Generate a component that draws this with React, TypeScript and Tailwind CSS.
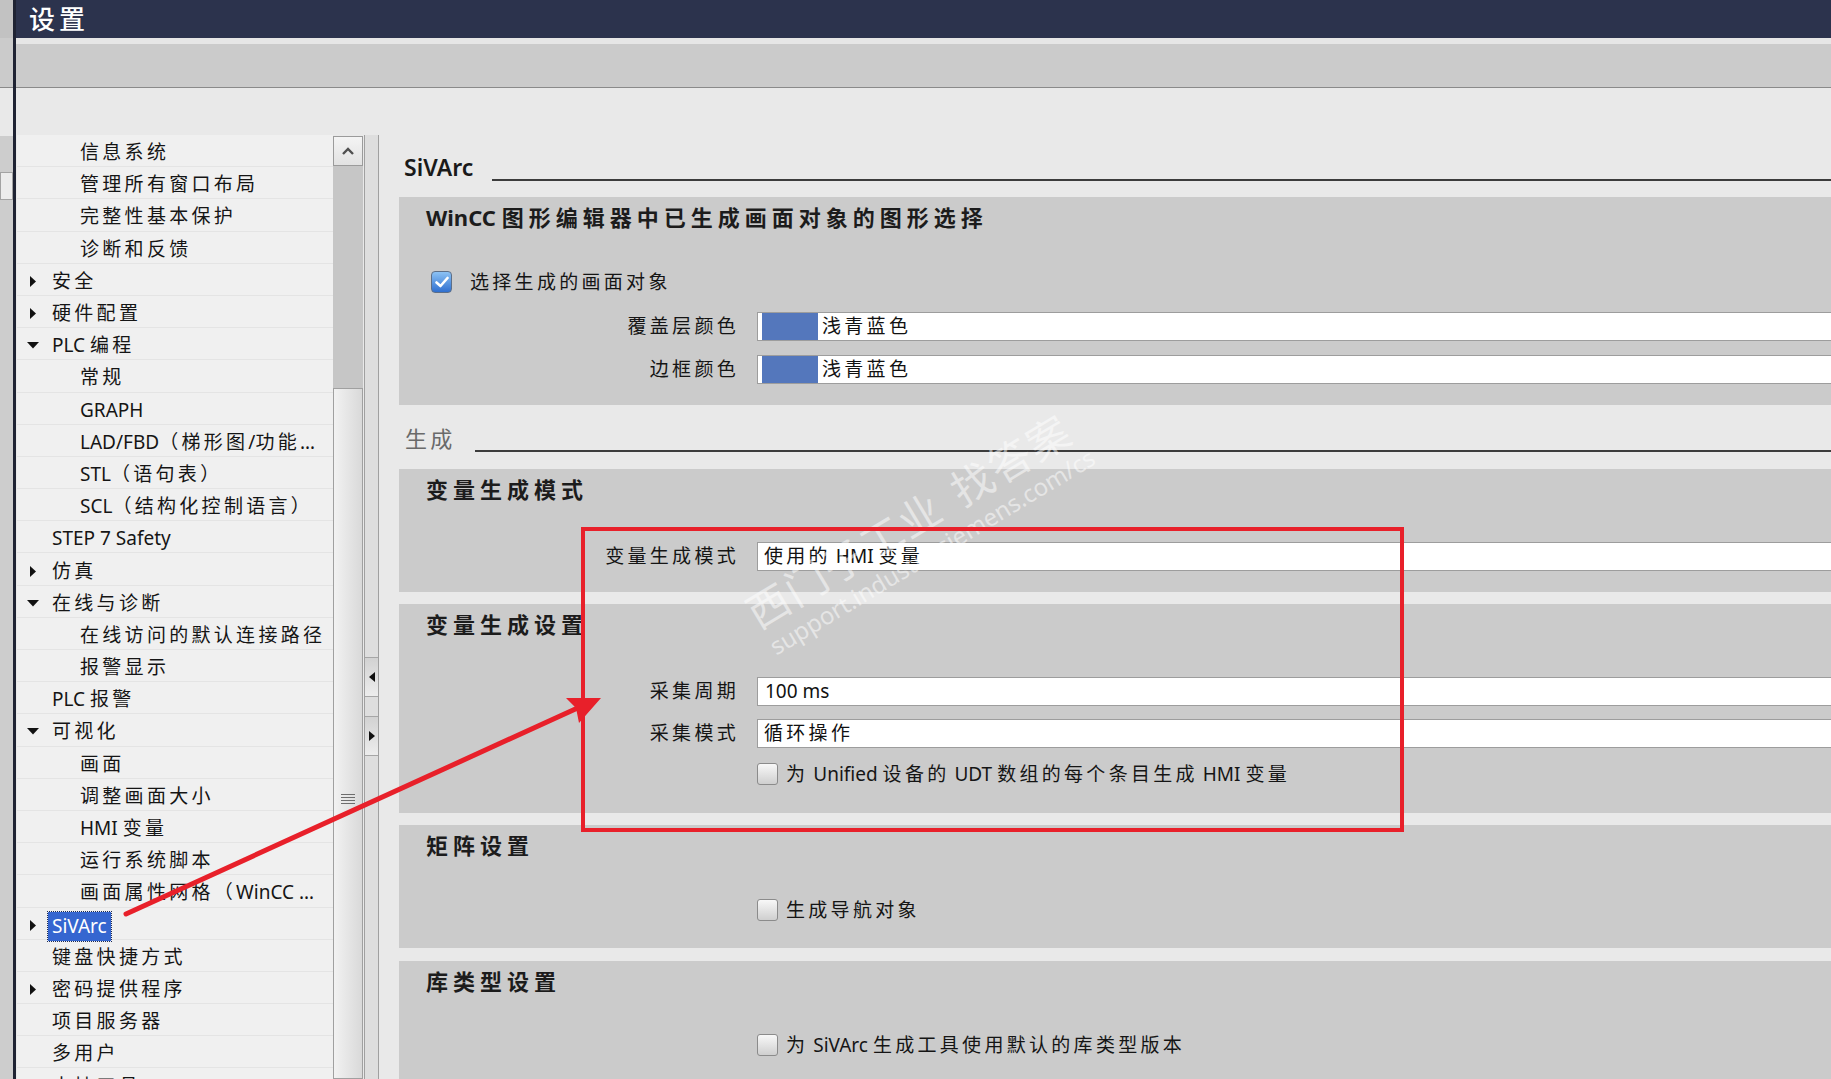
import React from "react";

const CJK_RE = /([\u2e80-\u9fff\uff00-\uffef\u3000-\u303f]+)/;
const CJK_TEST = /[\u2e80-\u9fff\uff00-\uffef\u3000-\u303f]/;

// CJK runs in the TIA UI are spaced out, latin runs are not
function T({ s, wide }: { s: string; wide?: boolean }) {
  const parts = s.split(CJK_RE);
  return (
    <>
      {parts.map((p, i) =>
        CJK_TEST.test(p) ? (
          <span key={i} className={wide ? "tracking-[5px]" : "tracking-[3.3px]"}>
            {p}
          </span>
        ) : (
          <span key={i}>{p}</span>
        )
      )}
    </>
  );
}

type TreeItem = { text: string; level: 1 | 2; arrow?: "right" | "down"; selected?: boolean };

const tree: TreeItem[] = [
  { text: "信息系统", level: 2 },
  { text: "管理所有窗口布局", level: 2 },
  { text: "完整性基本保护", level: 2 },
  { text: "诊断和反馈", level: 2 },
  { text: "安全", level: 1, arrow: "right" },
  { text: "硬件配置", level: 1, arrow: "right" },
  { text: "PLC 编程", level: 1, arrow: "down" },
  { text: "常规", level: 2 },
  { text: "GRAPH", level: 2 },
  { text: "LAD/FBD（梯形图/功能…", level: 2 },
  { text: "STL（语句表）", level: 2 },
  { text: "SCL（结构化控制语言）", level: 2 },
  { text: "STEP 7 Safety", level: 1 },
  { text: "仿真", level: 1, arrow: "right" },
  { text: "在线与诊断", level: 1, arrow: "down" },
  { text: "在线访问的默认连接路径", level: 2 },
  { text: "报警显示", level: 2 },
  { text: "PLC 报警", level: 1 },
  { text: "可视化", level: 1, arrow: "down" },
  { text: "画面", level: 2 },
  { text: "调整画面大小", level: 2 },
  { text: "HMI 变量", level: 2 },
  { text: "运行系统脚本", level: 2 },
  { text: "画面属性网格（WinCC …", level: 2 },
  { text: "SiVArc", level: 1, arrow: "right", selected: true },
  { text: "键盘快捷方式", level: 1 },
  { text: "密码提供程序", level: 1, arrow: "right" },
  { text: "项目服务器", level: 1 },
  { text: "多用户", level: 1 },
  { text: "支持工具", level: 1 },
];

function Arrow({ dir }: { dir: "right" | "down" }) {
  if (dir === "right")
    return (
      <svg width="7" height="11" viewBox="0 0 7 11">
        <polygon points="0,0 6,5.5 0,11" fill="#111" />
      </svg>
    );
  return (
    <svg width="12" height="7" viewBox="0 0 12 7">
      <polygon points="0,0 12,0 6,6.5" fill="#111" />
    </svg>
  );
}

function TreeRow({ item }: { item: TreeItem }) {
  return (
    <div className="h-[32.2px] pt-[4px] flex items-center border-b border-[#e4e4e4] text-[19px] leading-none text-[#151515] whitespace-nowrap">
      {item.level === 1 ? (
        <div className="w-[31px] flex items-center justify-center pl-[1px]">
          {item.arrow && <Arrow dir={item.arrow} />}
        </div>
      ) : (
        <div className="w-[63px]" />
      )}
      {item.selected ? (
        <span className="h-[29px] mt-[2px] px-[4px] flex items-center bg-[#3566d0] text-white outline outline-1 outline-dotted outline-[#1b2a55]">
          {item.text}
        </span>
      ) : (
        <span className={item.level === 1 ? "pl-[4px]" : ""}>
          <T s={item.text} />
        </span>
      )}
    </div>
  );
}

function CheckBox({ checked }: { checked?: boolean }) {
  if (checked)
    return (
      <div className="w-[21px] h-[22px] rounded-[4px] border border-[#5d6f88] bg-linear-to-b from-[#8cc2f4] to-[#2f6fcf] flex items-center justify-center shrink-0">
        <svg width="14" height="12" viewBox="0 0 14 12">
          <path d="M1.5 6.5 L5.5 10 L12.5 2" stroke="#fff" strokeWidth="2.6" fill="none" strokeLinecap="round" strokeLinejoin="round" />
        </svg>
      </div>
    );
  return (
    <div className="w-[21px] h-[22px] rounded-[3px] border border-[#8b8b8b] bg-linear-to-b from-[#f8f8f8] to-[#cfcfcf] shrink-0" />
  );
}

function Field({ label, children }: { label: string; children: React.ReactNode }) {
  return (
    <div className="flex items-center h-[29px]">
      <div className="w-[340px] text-right text-[19px] leading-none text-[#151515] whitespace-nowrap">
        <T s={label} />
      </div>
      <div className="ml-[18px] flex-1 h-full bg-white border border-[#9d9d9d] flex items-center text-[19px] leading-none text-[#111] whitespace-nowrap">
        {children}
      </div>
    </div>
  );
}

function Panel({ title, className, children }: { title: string; className: string; children: React.ReactNode }) {
  return (
    <div className={"bg-[#cbcbcb] pt-[5px] " + className}>
      <div className="h-[30px] pl-[27px] text-[22px] font-bold leading-[30px] text-[#1c1c1c] whitespace-nowrap">
        <T s={title} wide />
      </div>
      {children}
    </div>
  );
}

function Heading({ text, muted, className }: { text: string; muted?: boolean; className: string }) {
  return (
    <div className={"flex items-end h-[28px] " + className}>
      <span className={muted ? "text-[22px] leading-[28px] text-[#6a6a6a]" : "text-[23px] leading-[28px] font-semibold text-[#1a1a1a]"}>
        <T s={text} />
      </span>
      <div className="flex-1 h-[2px] bg-[#3c3c3c] ml-[19px]" />
    </div>
  );
}

function Swatch() {
  return <div className="ml-[4px] w-[56px] h-full bg-[#5477bc]" />;
}

export default function App() {
  return (
    <div className="relative w-[1831px] h-[1079px] overflow-hidden flex bg-[#e9e9e9] font-['Noto_Sans','Noto_Sans_CJK_SC',sans-serif]">
      {/* window behind, left edge */}
      <div className="w-[13px] shrink-0 flex flex-col bg-[#cdcdcd]">
        <div className="h-[38px] bg-[#c2c2c2]" />
        <div className="h-[50px] bg-[#cbcbcb] border-b border-[#8a8a8a]" />
        <div className="h-[48px] bg-[#e9e9e9]" />
        <div className="mt-[36px] h-[28px] bg-[#ececec] border border-[#a3a3a3]" />
        <div className="flex-1 bg-[#cdcdcd]" />
      </div>
      <div className="w-[3px] shrink-0 bg-[#1f2333]" />

      <div className="flex-1 flex flex-col min-w-0">
        <div className="h-[38px] bg-[#2c334d] flex items-center pl-[13px] text-white text-[26px] tracking-[4px] leading-none font-medium">设置</div>
        <div className="h-[6px] bg-[#e6e6e6]" />
        <div className="h-[44px] bg-[#cbcbcb] border-b border-[#8a8a8a]" />

        <div className="flex-1 flex pt-[47px] min-h-0">
          {/* tree */}
          <div className="ml-[1px] w-[316px] shrink-0 bg-[#f0f0f0] overflow-hidden">
            {tree.map((item, i) => (
              <TreeRow key={i} item={item} />
            ))}
          </div>

          {/* scrollbar */}
          <div className="w-[30px] shrink-0 flex flex-col">
            <div className="mt-[1px] h-[30px] border border-[#9b9b9b] bg-linear-to-b from-[#f4f4f4] to-[#e2e2e2] flex items-center justify-center">
              <svg width="14" height="9" viewBox="0 0 14 9">
                <path d="M2 7 L7 2 L12 7" stroke="#505050" strokeWidth="2.4" fill="none" />
              </svg>
            </div>
            <div className="h-[222px] bg-[#c6c6c6]" />
            <div className="flex-1 border border-[#a0a0a0] bg-linear-to-r from-[#f2f2f2] to-[#d9d9d9] flex flex-col items-center pt-[405px]">
              <div className="w-[14px] flex flex-col gap-[2px]">
                <div className="h-[1px] bg-[#6d6d6d]" />
                <div className="h-[1px] bg-[#6d6d6d]" />
                <div className="h-[1px] bg-[#6d6d6d]" />
                <div className="h-[1px] bg-[#6d6d6d]" />
              </div>
            </div>
          </div>

          {/* splitter */}
          <div className="ml-[1px] w-[15px] shrink-0 border-x border-[#a0a0a0] bg-[#dedede] flex flex-col pt-[522px]">
            <div className="h-[40px] border-y border-[#a6a6a6] bg-linear-to-b from-[#d2d2d2] to-[#ededed] flex items-center justify-center">
              <svg width="6" height="10" viewBox="0 0 6 10">
                <polygon points="6,0 0,5 6,10" fill="#111" />
              </svg>
            </div>
            <div className="h-[19px]" />
            <div className="h-[40px] border-y border-[#a6a6a6] bg-linear-to-b from-[#d2d2d2] to-[#ededed] flex items-center justify-center">
              <svg width="6" height="10" viewBox="0 0 6 10">
                <polygon points="0,0 6,5 0,10" fill="#111" />
              </svg>
            </div>
          </div>

          {/* content */}
          <div className="ml-[20px] w-[1460px] shrink-0 flex flex-col">
            <Heading text="SiVArc" className="mt-[18px] pl-[5px]" />

            <Panel title="WinCC 图形编辑器中已生成画面对象的图形选择" className="mt-[16px] pb-[21px]">
              <div className="mt-[39px] h-[22px] pl-[32px] flex items-center gap-[9px] text-[19px] leading-none text-[#151515]">
                <CheckBox checked />
                <T s="选择生成的画面对象" />
              </div>
              <div className="mt-[19px]">
                <Field label="覆盖层颜色">
                  <Swatch />
                  <span className="ml-[4px]"><T s="浅青蓝色" /></span>
                </Field>
              </div>
              <div className="mt-[14px]">
                <Field label="边框颜色">
                  <Swatch />
                  <span className="ml-[4px]"><T s="浅青蓝色" /></span>
                </Field>
              </div>
            </Panel>

            <Heading text="生成" muted className="mt-[19px] pl-[6px]" />

            <Panel title="变量生成模式" className="mt-[17px] pb-[21px]">
              <div className="mt-[38px]">
                <Field label="变量生成模式">
                  <span className="pl-[6px]"><T s="使用的 HMI 变量" /></span>
                </Field>
              </div>
            </Panel>

            <Panel title="变量生成设置" className="mt-[12px] pb-[28px]">
              <div className="mt-[38px]">
                <Field label="采集周期">
                  <span className="pl-[7px]">100 ms</span>
                </Field>
              </div>
              <div className="mt-[13px]">
                <Field label="采集模式">
                  <span className="pl-[6px]"><T s="循环操作" /></span>
                </Field>
              </div>
              <div className="mt-[15px] h-[22px] pl-[358px] flex items-center gap-[8px] text-[19px] leading-none text-[#151515] whitespace-nowrap">
                <CheckBox />
                <span><T s="为 Unified 设备的 UDT 数组的每个条目生成 HMI 变量" /></span>
              </div>
            </Panel>

            <Panel title="矩阵设置" className="mt-[12px] pb-[27px]">
              <div className="mt-[39px] h-[22px] pl-[358px] flex items-center gap-[8px] text-[19px] leading-none text-[#151515] whitespace-nowrap">
                <CheckBox />
                <span><T s="生成导航对象" /></span>
              </div>
            </Panel>

            <Panel title="库类型设置" className="mt-[13px] pb-[27px]">
              <div className="mt-[38px] h-[22px] pl-[358px] flex items-center gap-[8px] text-[19px] leading-none text-[#151515] whitespace-nowrap">
                <CheckBox />
                <span><T s="为 SiVArc 生成工具使用默认的库类型版本" /></span>
              </div>
            </Panel>
          </div>
        </div>
      </div>

      {/* watermark */}
      <div className="absolute left-[738px] top-[596px] origin-top-left -rotate-[31deg] text-white/50 pointer-events-none whitespace-nowrap">
        <div className="text-[42px] leading-[48px] tracking-[2px]">
          西门子工业<span className="ml-[18px]">找答案</span>
        </div>
        <div className="text-[24px] leading-[28px] pl-[2px]">support.industry.siemens.com/cs</div>
      </div>

      {/* red annotation */}
      <svg className="absolute inset-0 pointer-events-none" width="1831" height="1079" viewBox="0 0 1831 1079">
        <rect x="583" y="529" width="819" height="301" fill="none" stroke="#e8202a" strokeWidth="4" />
        <line x1="126" y1="914" x2="582" y2="706" stroke="#e8202a" strokeWidth="5" strokeLinecap="round" />
        <polygon points="601,698 566,698 576,708 579,723" fill="#e8202a" />
      </svg>
    </div>
  );
}
